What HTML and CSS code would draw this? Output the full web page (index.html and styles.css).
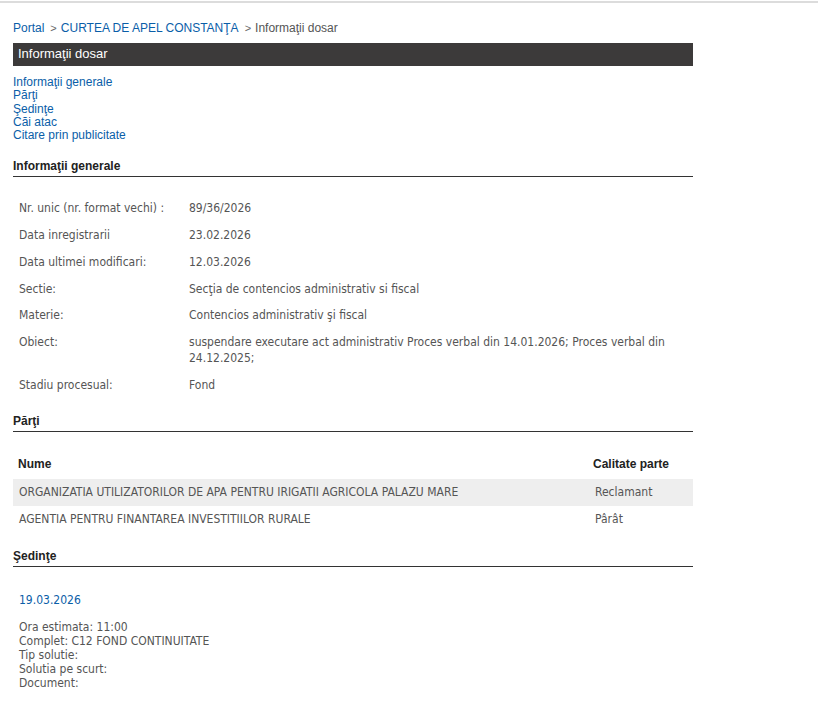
FILE: index.html
```html
<!DOCTYPE html>
<html lang="ro">
<head>
<meta charset="utf-8">
<title>Informaţii dosar</title>
<link rel="stylesheet" href="styles.css">
</head>
<body>
<div class="topline"></div>
<div class="page">
  <div class="breadcrumb">
    <a href="#">Portal</a><span class="sep">&gt;</span><a href="#">CURTEA DE APEL CONSTANŢA</a><span class="sep">&gt;</span><span class="current">Informaţii dosar</span>
  </div>
  <div class="titlebar">Informaţii dosar</div>
  <ul class="toc">
    <li><a href="#">Informaţii generale</a></li>
    <li><a href="#">Părţi</a></li>
    <li><a href="#">Şedinţe</a></li>
    <li><a href="#">Căi atac</a></li>
    <li><a href="#">Citare prin publicitate</a></li>
  </ul>

  <h2 class="section-title sec-general">Informaţii generale</h2>
  <table class="info">
    <tr><td class="lbl">Nr. unic (nr. format vechi) :</td><td>89/36/2026</td></tr>
    <tr><td class="lbl">Data inregistrarii</td><td>23.02.2026</td></tr>
    <tr><td class="lbl">Data ultimei modificari:</td><td>12.03.2026</td></tr>
    <tr><td class="lbl">Sectie:</td><td>Secţia de contencios administrativ si fiscal</td></tr>
    <tr><td class="lbl">Materie:</td><td>Contencios administrativ şi fiscal</td></tr>
    <tr><td class="lbl">Obiect:</td><td>suspendare executare act administrativ Proces verbal din 14.01.2026; Proces verbal din 24.12.2025;</td></tr>
    <tr><td class="lbl">Stadiu procesual:</td><td>Fond</td></tr>
  </table>

  <h2 class="section-title sec-parti">Părţi</h2>
  <table class="parti">
    <thead>
      <tr><th class="c-name">Nume</th><th class="c-cal">Calitate parte</th></tr>
    </thead>
    <tbody>
      <tr class="odd"><td>ORGANIZATIA UTILIZATORILOR DE APA PENTRU IRIGATII AGRICOLA PALAZU MARE</td><td>Reclamant</td></tr>
      <tr><td>AGENTIA PENTRU FINANTAREA INVESTITIILOR RURALE</td><td>Pârât</td></tr>
    </tbody>
  </table>

  <h2 class="section-title sec-sedinte">Şedinţe</h2>
  <div class="sedinta">
    <div class="sed-date">19.03.2026</div>
    <div class="sed-lines">
      <div>Ora estimata: 11:00</div>
      <div>Complet: C12 FOND CONTINUITATE</div>
      <div>Tip solutie:</div>
      <div>Solutia pe scurt:</div>
      <div>Document:</div>
    </div>
  </div>
</div>
</body>
</html>
```

FILE: styles.css
```css
html, body {
  margin: 0;
  padding: 0;
  background: #ffffff;
}
body {
  font-family: "Liberation Sans", Arial, sans-serif;
  font-size: 12px;
  color: #333333;
}
.topline {
  height: 1px;
  border-bottom: 2px solid #dcdcdc;
}
.page {
  width: 680px;
  margin-left: 13px;
}
a {
  color: #0a5ea8;
  text-decoration: none;
}
.breadcrumb {
  margin-top: 18px;
  height: 15px;
  line-height: 15px;
  font-size: 12px;
}
.breadcrumb .sep {
  color: #666666;
  font-size: 11px;
  margin: 0 4px 0 6px;
}
.breadcrumb .current {
  color: #555555;
}
.titlebar {
  margin-top: 7px;
  height: 23px;
  line-height: 22px;
  background: #3c3a3a;
  color: #ffffff;
  font-size: 13px;
  padding-left: 5px;
}
.toc {
  list-style: none;
  margin: 10px 0 0 0;
  padding: 0;
}
.toc li {
  line-height: 13.3px;
  font-size: 12px;
}
.section-title {
  margin: 0;
  font-size: 12px;
  font-weight: bold;
  color: #222222;
  line-height: 14px;
  padding-bottom: 3px;
  border-bottom: 1px solid #333333;
}
.sec-general { margin-top: 17px; }
.sec-parti { margin-top: 16px; }
.sec-sedinte { margin-top: 16px; }

.info, .parti {
  border-collapse: collapse;
  width: 100%;
  font-family: "DejaVu Sans Condensed", "DejaVu Sans", sans-serif;
  font-size: 12px;
  color: #555555;
}
.info {
  margin-top: 18px;
}
.info td {
  vertical-align: top;
  padding: 5px 6px 5.7px 6px;
  line-height: 16px;
}
.info td.lbl {
  width: 158px;
}
.parti {
  margin-top: 19px;
}
.parti th {
  font-family: "Liberation Sans", Arial, sans-serif;
  font-size: 12px;
  font-weight: bold;
  color: #222222;
  text-align: left;
  padding: 5px 5px 7px 5px;
  line-height: 16px;
}
.parti th.c-cal {
  width: 95px;
  padding-left: 4px;
}
.parti td {
  padding: 5px 6px 6px 6px;
  line-height: 16px;
}
.parti tr.odd td {
  background: #eeeeee;
}
.sedinta {
  font-family: "DejaVu Sans Condensed", "DejaVu Sans", sans-serif;
  font-size: 12px;
  padding-left: 6px;
  color: #555555;
}
.sed-date {
  margin-top: 26px;
  color: #0a5ea8;
  font-size: 12px;
  line-height: 14px;
}
.sed-lines {
  margin-top: 13px;
  line-height: 14px;
}
```
